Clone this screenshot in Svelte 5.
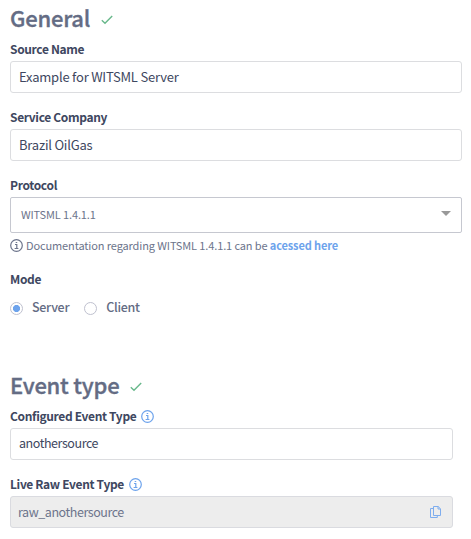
<script>
  let protocol = 'WITSML 1.4.1.1';
  let mode = 'Server';
</script>

{#snippet check()}
  <svg class="check" width="12" height="10" viewBox="0 0 12 10"><path d="M.8 5.3 4 8.3 11.2 1" /></svg>
{/snippet}

{#snippet info()}
  <svg class="info" width="13" height="13" viewBox="0 0 13 13">
    <circle cx="6.5" cy="6.5" r="5.8" />
    <path d="M5 5.5h1.8v3.8M4.6 9.5h3.8M5.7 3.5h1.5" />
  </svg>
{/snippet}

<main>
  <section class="general">
    <h2><span>General</span>{@render check()}</h2>
    <div class="field">
      <div class="label"><span>Source Name</span></div>
      <div class="input"><span>Example for WITSML Server</span></div>
    </div>
    <div class="field">
      <div class="label"><span>Service Company</span></div>
      <div class="input"><span>Brazil OilGas</span></div>
    </div>
    <div class="protocol">
      <div class="label"><span>Protocol</span></div>
      <div class="select"><span>{protocol}</span><i></i></div>
      <div class="help">{@render info()}<span>Documentation regarding {protocol} can be <b>acessed here</b></span></div>
    </div>
    <div class="mode">
      <div class="label"><span>Mode</span></div>
      <div class="radios">
        {#each ['Server', 'Client'] as option}
          <div class="option"><i class:on={option === mode}></i><span>{option}</span></div>
        {/each}
      </div>
    </div>
  </section>
  <section class="events">
    <h2><span>Event type</span>{@render check()}</h2>
    <div class="field">
      <div class="label"><span>Configured Event Type</span>{@render info()}</div>
      <div class="input"><span>anothersource</span></div>
    </div>
    <div class="field">
      <div class="label"><span>Live Raw Event Type</span>{@render info()}</div>
      <div class="input disabled">
        <span>raw_anothersource</span>
        <svg class="copy" width="11" height="13" viewBox="0 0 11 13">
          <path d="M3.5.5h4.7l2.3 2.3v6.7h-7zM8 .5v2.5h2.5M3.5 2.5h-3v9h6.8v-2" />
        </svg>
      </div>
    </div>
  </section>
</main>

<style>
  :global(body) { background: #fff; }
  main {
    box-sizing: border-box;
    height: 539px;
    padding: 6px 9px 0 10px;
    overflow: hidden;
    font-family: "Noto Sans CJK JP", "Noto Sans", sans-serif;
    font-size: 13px;
    color: #3e4760;
    white-space: nowrap;
  }
  h2 {
    display: flex;
    align-items: center;
    gap: 11px;
    height: 26px;
    margin: 0 0 8px;
    font-size: 22px;
    line-height: 26px;
    letter-spacing: -.22px;
    font-weight: 500;
    -webkit-text-stroke: .35px #646c84;
    color: #646c84;
  }
  h2 span { margin-top: -5px; }
  svg { flex: none; fill: none; }
  .check { stroke: #68b88b; stroke-width: 1.4; margin-top: 2px; }
  .field { height: 68px; }
  .label {
    display: flex;
    align-items: center;
    gap: 5px;
    height: 18px;
    margin-bottom: 3px;
    font-size: 12px;
    line-height: 18px;
    letter-spacing: -.35px;
    font-weight: 700;
  }
  .info { stroke: #6da3ec; stroke-width: 1.2; }
  .input {
    box-sizing: border-box;
    display: flex;
    align-items: center;
    justify-content: space-between;
    height: 32px;
    padding: 0 8px;
    border: 1px solid #dcdde0;
    border-radius: 3px;
    line-height: 20px;
    letter-spacing: -.21px;
  }
  .protocol { height: 94px; }
  .select {
    box-sizing: border-box;
    display: flex;
    align-items: center;
    justify-content: space-between;
    height: 36px;
    padding: 0 10px;
    border: 1px solid #c6c8d0;
    border-radius: 2px;
    font-size: 11px;
    letter-spacing: -.13px;
    color: #6c748b;
  }
  .select span { margin-top: -2px; }
  .select i {
    border: 5px solid transparent;
    border-top-color: #999;
    border-bottom: 0;
    margin-top: -3px;
  }
  .help {
    display: flex;
    align-items: center;
    gap: 3px;
    height: 18px;
    margin-top: 3px;
    font-size: 11px;
    letter-spacing: -.12px;
    color: #6c748b;
  }
  .help .info { stroke: #6c748b; }
  b { color: #6da3ec; font-weight: 700; }
  .mode { height: 103px; }
  .radios { display: flex; gap: 15px; margin-top: 10px; }
  .option {
    display: flex;
    align-items: center;
    gap: 9px;
    height: 20px;
    font-size: 12.5px;
    letter-spacing: -.3px;
    font-weight: 500;
    line-height: 20px;
    color: #646c84;
  }
  .option span { margin-top: -2px; }
  .option i {
    box-sizing: border-box;
    width: 13px;
    height: 13px;
    border: 1px solid #bfc1cf;
    border-radius: 50%;
  }
  .option .on { background: radial-gradient(circle, #6da3ec 3.2px, #fff 3.9px); }
  .events { padding-right: 9px; }
  .events .input { font-size: 12.5px; letter-spacing: -.44px; }
  .events .input:not(.disabled) span { margin-top: -2px; }
  .disabled { background: #ededed; border-color: #dadbe0; padding-left: 7px; padding-right: 11px; color: #6c748b; }
  .copy { stroke: #7eadee; margin-top: 1px; }
</style>
